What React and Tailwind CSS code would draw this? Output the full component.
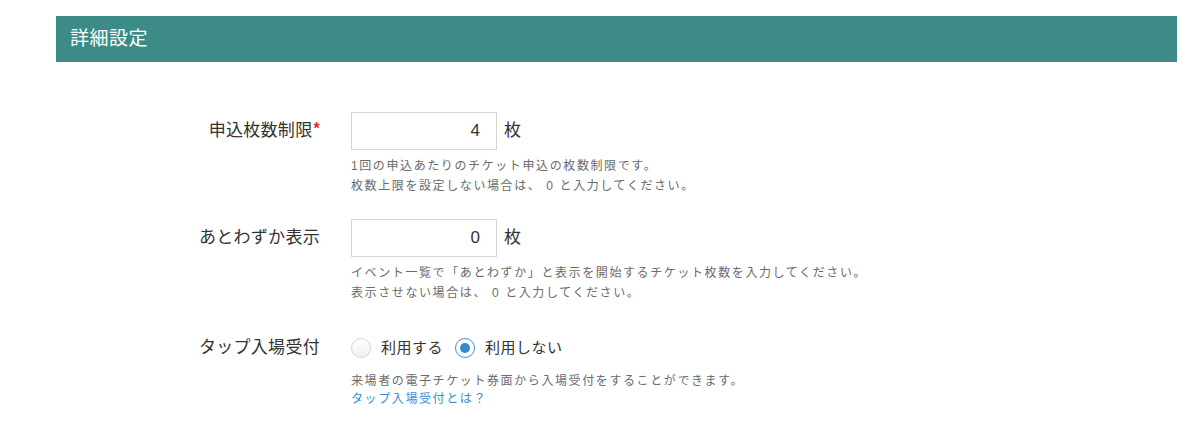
import React, { useState } from "react";

const FONT = { fontFamily: '"Liberation Sans", "Noto Sans CJK JP", sans-serif' };

function Row({ label, required, children, className = "" }) {
  return (
    <div className={`flex ${className}`}>
      <div className="w-[295px] shrink-0 pr-[31px] h-[38px] flex items-center justify-end text-[17px] text-[#333] tracking-[0.3px]">
        {label}
        {required && <span className="text-[#d9302c] text-[16px] font-bold ml-[1px] -mt-[5px]">*</span>}
      </div>
      <div className="flex-1">{children}</div>
    </div>
  );
}

function Help({ children }) {
  return <p className="text-[12px] leading-[20px] tracking-[1.6px] text-[#6b6b6b]">{children}</p>;
}

function NumberField({ value, onChange }) {
  return (
    <div className="flex items-center gap-[7px]">
      <input
        value={value}
        onChange={(e) => onChange(e.target.value)}
        className="w-[146px] h-[38px] border border-[#d6d6d6] bg-white px-[16px] text-right text-[17px] text-[#333] outline-none"
      />
      <span className="text-[17px] text-[#333]">枚</span>
    </div>
  );
}

function Radio({ checked, label, onClick }) {
  return (
    <button onClick={onClick} className="flex items-center gap-[10px] text-[15px] text-[#333] tracking-[0.5px]">
      <span
        className={`w-[20px] h-[20px] rounded-full border flex items-center justify-center ${
          checked ? "border-[#3a8fd3] bg-white" : "border-[#d4d4d4] bg-gradient-to-b from-white to-[#f0f0f0]"
        }`}
      >
        {checked && <span className="w-[10px] h-[10px] rounded-full bg-[#2f8bd0]" />}
      </span>
      {label}
    </button>
  );
}

export default function App() {
  const [limit, setLimit] = useState("4");
  const [few, setFew] = useState("0");
  const [tap, setTap] = useState(false);

  return (
    <div className="w-[1200px] h-[428px] bg-white pt-[16px]" style={FONT}>
      <div className="ml-[56px] w-[1121px]">
        <div className="h-[46px] bg-[#3d8b86] flex items-center px-[14px]">
          <h2 className="text-white text-[19px] tracking-[0.5px]">詳細設定</h2>
        </div>

        <div className="pt-[50px]">
          <Row label="申込枚数制限" required>
            <NumberField value={limit} onChange={setLimit} />
            <div className="mt-[6px]">
              <Help>1回の申込あたりのチケット申込の枚数制限です。</Help>
              <Help>枚数上限を設定しない場合は、 0 と入力してください。</Help>
            </div>
          </Row>

          <Row label="あとわずか表示" className="mt-[23px]">
            <NumberField value={few} onChange={setFew} />
            <div className="mt-[6px]">
              <Help>イベント一覧で「あとわずか」と表示を開始するチケット枚数を入力してください。</Help>
              <Help>表示させない場合は、 0 と入力してください。</Help>
            </div>
          </Row>

          <Row label="タップ入場受付" className="mt-[26px]">
            <div className="h-[38px] flex items-center gap-[12px]">
              <Radio checked={tap} label="利用する" onClick={() => setTap(true)} />
              <Radio checked={!tap} label="利用しない" onClick={() => setTap(false)} />
            </div>
            <div className="mt-[5px]">
              <p className="text-[12px] leading-[18px] tracking-[1.6px] text-[#6b6b6b]">
                来場者の電子チケット券面から入場受付をすることができます。
              </p>
              <a href="#" className="block text-[12px] leading-[18px] tracking-[1.6px] text-[#3a8fd3]">
                タップ入場受付とは？
              </a>
            </div>
          </Row>
        </div>
      </div>
    </div>
  );
}
